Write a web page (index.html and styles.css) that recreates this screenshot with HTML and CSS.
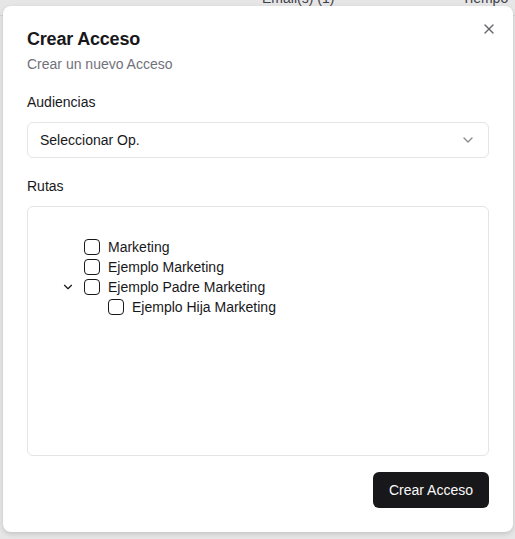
FILE: index.html
```html
<!DOCTYPE html>
<html lang="es">
<head>
    <meta charset="UTF-8">
    <meta name="viewport" content="width=device-width, initial-scale=1.0">
    <title>Crear Acceso</title>
    <link rel="stylesheet" href="styles.css">
</head>

<body>
    <!-- table header of the page underneath the dialog -->
    <div class="page-head">
        <span class="col col-emails">Email(s) (1)</span>
        <span class="col col-time">Tiempo</span>
    </div>

    <div class="dialog" role="dialog">
        <button class="close" aria-label="Cerrar">
            <svg width="16" height="16" viewBox="0 0 24 24" fill="none" stroke="currentColor" stroke-width="2" stroke-linecap="round" stroke-linejoin="round">
                <path d="M18 6 6 18"></path>
                <path d="m6 6 12 12"></path>
            </svg>
        </button>

        <div class="dialog-header">
            <h2>Crear Acceso</h2>
            <p>Crear un nuevo Acceso</p>
        </div>

        <form class="form">
            <div class="field">
                <label>Audiencias</label>
                <button type="button" class="select">
                    <span>Seleccionar Op.</span>
                    <svg width="16" height="16" viewBox="0 0 24 24" fill="none" stroke="currentColor" stroke-width="2" stroke-linecap="round" stroke-linejoin="round">
                        <path d="m6 9 6 6 6-6"></path>
                    </svg>
                </button>
            </div>

            <div class="field">
                <label>Rutas</label>
                <div class="tree">
                    <div class="node">
                        <span class="toggle"></span>
                        <input type="checkbox" class="check">
                        <span>Marketing</span>
                    </div>
                    <div class="node">
                        <span class="toggle"></span>
                        <input type="checkbox" class="check">
                        <span>Ejemplo Marketing</span>
                    </div>
                    <div class="node">
                        <span class="toggle">
                            <svg width="14" height="14" viewBox="0 0 24 24" fill="none" stroke="currentColor" stroke-width="2" stroke-linecap="round" stroke-linejoin="round">
                                <path d="m6 9 6 6 6-6"></path>
                            </svg>
                        </span>
                        <input type="checkbox" class="check">
                        <span>Ejemplo Padre Marketing</span>
                    </div>
                    <div class="node child">
                        <span class="toggle"></span>
                        <input type="checkbox" class="check">
                        <span>Ejemplo Hija Marketing</span>
                    </div>
                </div>
            </div>

            <div class="footer">
                <button type="submit" class="btn">Crear Acceso</button>
            </div>
        </form>
    </div>
</body>
</html>
```

FILE: styles.css
```css
* {
    margin: 0;
    padding: 0;
    box-sizing: border-box;
}

body {
    font-family: 'Liberation Sans', Arial, sans-serif;
    background-color: #e6e6e6;
    color: #18181b;
    font-size: 14px;
    height: 539px;
    overflow: hidden;
}

/* page behind */
.page-head {
    position: relative;
    height: 28px;
    border-bottom: 1px solid #d4d4d4;
    margin-top: -12px;
    color: #3f3f46;
    line-height: 20px;
}

.col {
    position: absolute;
    top: 0;
}

.col-emails {
    left: 262px;
}

.col-time {
    left: 462px;
}

/* Dialog */
.dialog {
    position: absolute;
    top: 6px;
    left: 3px;
    width: 510px;
    height: 526px;
    background: #fff;
    border-radius: 8px;
    padding: 24px;
    box-shadow: 0 2px 5px rgba(0, 0, 0, 0.15);
}

.close {
    position: absolute;
    top: 15px;
    right: 16px;
    border: none;
    background: none;
    color: #3f3f46;
    opacity: 0.8;
    display: flex;
}

.dialog-header h2 {
    font-size: 18px;
    line-height: 18px;
    font-weight: 700;
    letter-spacing: -0.2px;
}

.dialog-header p {
    margin-top: 6px;
    line-height: 20px;
    color: #71717a;
}

.form {
    margin-top: 18px;
    display: flex;
    flex-direction: column;
    gap: 18px;
}

.field {
    display: flex;
    flex-direction: column;
    gap: 10px;
}

.field label {
    line-height: 20px;
}

.select {
    height: 36px;
    display: flex;
    align-items: center;
    justify-content: space-between;
    padding: 0 12px;
    border: 1px solid #e4e4e7;
    border-radius: 6px;
    background: #fff;
    font-family: inherit;
    font-size: 14px;
    color: #18181b;
}

.select svg {
    opacity: 0.5;
}

/* Rutas tree */
.tree {
    height: 250px;
    border: 1px solid #e4e4e7;
    border-radius: 6px;
    padding: 30px 16px 0 32px;
}

.node {
    display: flex;
    align-items: center;
    gap: 8px;
    height: 20px;
}

.node.child {
    margin-left: 24px;
}

.toggle {
    width: 16px;
    height: 16px;
    display: flex;
    align-items: center;
    justify-content: center;
}

.check {
    appearance: none;
    width: 16px;
    height: 16px;
    border: 1px solid #18181b;
    border-radius: 4px;
    background: #fff;
}

.footer {
    margin-top: -2px;
    display: flex;
    justify-content: flex-end;
}

.btn {
    height: 36px;
    padding: 0 16px;
    background-color: #18181b;
    color: #fafafa;
    border: none;
    border-radius: 6px;
    font-family: inherit;
    font-size: 14px;
    cursor: pointer;
}
```
